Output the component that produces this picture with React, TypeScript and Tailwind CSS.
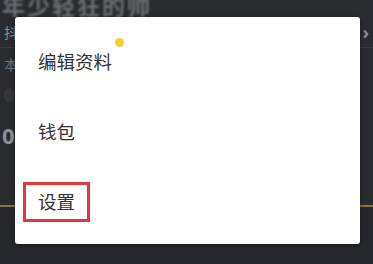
import React from "react";

const MENU = ["编辑资料", "钱包", "设置"];

export default function App() {
  return (
    <div
      className="relative w-[373px] h-[264px] overflow-hidden bg-[#2a2b30]"
      style={{ fontFamily: '"Noto Sans", "Noto Sans CJK SC", sans-serif' }}
    >
      {/* Background profile page, dimmed */}
      <div className="flex flex-col">
        <div className="h-[17px] overflow-hidden">
          <p className="-mt-[9px] pl-[2px] text-[23px] leading-[30px] font-bold text-[#6d6e73] blur-[1px] tracking-[2px]">
            年少轻狂的帅
          </p>
        </div>
        <div className="h-[30px] flex items-center justify-between px-[4px]">
          <span className="text-[14px] text-[#8b8c91]">抖</span>
          <span className="text-[18px] text-[#8b8c91] font-bold">›</span>
        </div>
        <div className="h-px bg-[#3a3b40]" />
        <div className="h-[32px] flex items-center px-[4px]">
          <span className="text-[14px] text-[#6f7075]">本</span>
        </div>
        <div className="h-[30px] flex items-center px-[4px]">
          <span className="w-[10px] h-[14px] rounded-full bg-[#35363b]" />
        </div>
        <div className="h-[50px] flex items-center px-[2px]">
          <span className="text-[22px] font-bold text-[#8e8f94]">0</span>
        </div>
        <div className="h-[45px] bg-[#2a2b30]" />
        <div className="h-[2px] bg-[#8c7530]" />
        <div className="h-[60px] bg-[#26272c]" />
      </div>

      {/* Popup menu */}
      <div className="absolute left-[15px] top-[17px] w-[345px] h-[227px] rounded-[3px] bg-white shadow-[0_1px_4px_rgba(0,0,0,0.4)] pt-[10px]">
        {MENU.map((item, i) => (
          <div key={item} className="h-[70px] flex items-center pl-[8px]">
            <div
              className={`h-[40px] flex items-center px-[12px] border-[3px] ${
                i === 2 ? "border-[#e8353d]" : "border-transparent"
              }`}
            >
              <span className="text-[18.5px] leading-none text-[#333333]">{item}</span>
            </div>
          </div>
        ))}
        <span className="absolute left-[100px] top-[21px] w-[9px] h-[9px] rounded-full bg-[#f8cf2f]" />
      </div>
    </div>
  );
}
